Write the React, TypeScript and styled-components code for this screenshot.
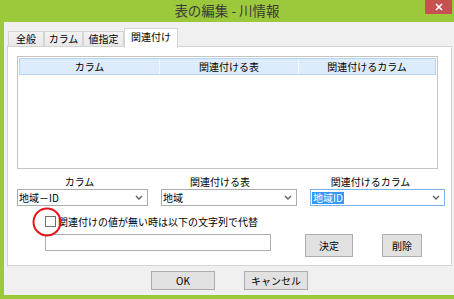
import styled, {createGlobalStyle} from "styled-components";

// 스타일
const GlobalStyle = createGlobalStyle`
  html, body {
    margin: 0;
    padding: 0;
  }
  body {
    width: 454px;
    height: 299px;
    overflow: hidden;
    font-family: "Noto Sans CJK JP", "Noto Sans", sans-serif;
    color: #000;
  }
  * {
    box-sizing: border-box;
  }
`;

const Window = styled.div`
  width: 454px;
  height: 299px;
  background: #9cc83c;
  display: flex;
  flex-direction: column;
`;
const TitleBar = styled.header`
  height: 22px;
  flex-shrink: 0;
  display: grid;
  grid-template-columns: 1fr auto 1fr;
  align-items: start;
`;
const Title = styled.h1`
  grid-column: 2;
  margin: 0;
  font-size: 13.5px;
  font-weight: normal;
  line-height: 21px;
  color: #3a3a3a;
`;
const CloseButton = styled.div`
  grid-column: 3;
  justify-self: end;
  margin-right: 2px;
  width: 27px;
  height: 14px;
  background: #c75050;
  display: flex;
  align-items: center;
  justify-content: center;
`;
const Frame = styled.div`
  flex: 1;
  padding: 0 4px 4px 4px;
  display: flex;
`;
const Body = styled.div`
  flex: 1;
  background: #f0f0f0;
  padding: 6px 4px 5px 3px;
  display: flex;
  flex-direction: column;
`;
const TabStrip = styled.div`
  height: 19px;
  margin-left: 1px;
  display: flex;
  align-items: flex-start;
`;
const Tab = styled.div<{$w: number; $active?: boolean}>`
  position: relative;
  z-index: ${p => (p.$active ? 2 : 0)};
  width: ${p => p.$w}px;
  height: ${p => (p.$active ? 20 : 15)}px;
  margin-top: ${p => (p.$active ? 0 : 3)}px;
  border: 1px solid #d4d4d4;
  border-bottom: none;
  background: ${p => (p.$active ? "#fff" : "linear-gradient(#f3f3f3, #e8e8e8)")};
  font-size: 10px;
  line-height: ${p => (p.$active ? 15 : 13)}px;
  text-align: center;
  & + & {
    border-left: ${p => (p.$active ? "1px solid #d4d4d4" : "none")};
  }
`;
const Panel = styled.section`
  position: relative;
  z-index: 1;
  margin-top: -1px;
  background: #fff;
  border: 1px solid #d4d4d4;
  padding: 9px 0 8px 9px;
  display: flex;
  flex-direction: column;
`;
const ListBox = styled.div`
  width: 421px;
  height: 113px;
  border: 1px solid #c4c4c4;
  padding: 1px;
`;
const ListHeader = styled.div`
  display: grid;
  grid-template-columns: 139px 139px 1fr;
  height: 17px;
  background: #dcecfc;
  border: 1px solid #b3d4f6;
`;
const HeaderCell = styled.div`
  font-size: 10px;
  line-height: 15px;
  text-align: center;
  border-left: 1px solid #f4f9fe;
  &:first-child {
    border-left: none;
  }
`;
const FieldRow = styled.div`
  margin-top: 6px;
  display: grid;
  grid-template-columns: 131px 136px 135px;
  column-gap: 13px;
`;
const Field = styled.div`
  display: flex;
  flex-direction: column;
  align-items: center;
`;
const FieldLabel = styled.div<{$shift: number}>`
  height: 14px;
  font-size: 10px;
  line-height: 14px;
  margin-right: ${p => p.$shift * 2}px;
`;
const Combo = styled.div<{$focused?: boolean}>`
  width: 100%;
  height: 17px;
  border: 1px solid ${p => (p.$focused ? "#7eb4ea" : "#acacac")};
  background: #fff;
  display: flex;
  align-items: center;
  justify-content: space-between;
  padding: 0 4px 0 1px;
  font-size: 10px;
`;
const Selected = styled.span`
  background: #3399ff;
  color: #fff;
  line-height: 12px;
  padding: 0 1px;
`;
const CheckRow = styled.label`
  position: relative;
  margin: 8px 0 0 28px;
  height: 14px;
  display: flex;
  align-items: center;
  font-size: 10px;
`;
const CheckBox = styled.span`
  width: 11px;
  height: 11px;
  border: 1px solid #707070;
  background: #fff;
  margin-right: 2px;
  flex-shrink: 0;
`;
const Annotation = styled.svg`
  position: absolute;
  left: -13px;
  top: -7px;
  pointer-events: none;
`;
const InputRow = styled.div`
  margin: 6px 0 0 28px;
  display: flex;
  align-items: flex-start;
`;
const TextBox = styled.div`
  width: 226px;
  height: 17px;
  border: 1px solid #abadb3;
  background: #fff;
  margin-right: 34px;
`;
const Button = styled.button<{$w: number; $h?: number}>`
  width: ${p => p.$w}px;
  height: ${p => p.$h ?? 23}px;
  margin-right: 29px;
  padding: 0;
  border: 1px solid #adadad;
  background: #e1e1e1;
  font-family: inherit;
  font-size: 10px;
  color: #000;
`;
const Footer = styled.footer`
  margin-top: 5px;
  display: flex;
  justify-content: center;
  gap: 29px;
  & > button {
    margin-right: 0;
  }
`;

// 기능
const tabs = [
  {label: "全般", width: 36},
  {label: "カラム", width: 39},
  {label: "値指定", width: 41},
  {label: "関連付け", width: 54, active: true},
];

const columns = ["カラム", "関連付ける表", "関連付けるカラム"];

function Chevron() {
  return (
    <svg width="8" height="5" viewBox="0 0 8 5">
      <path d="M1 1 L4 4 L7 1" fill="none" stroke="#606060" strokeWidth="1.4" />
    </svg>
  );
}

function App() {
  return (
    <Window>
      <GlobalStyle />
      <TitleBar>
        <Title>表の編集 - 川情報</Title>
        <CloseButton>
          <svg width="8" height="8" viewBox="0 0 8 8">
            <path d="M1 1 L7 7 M7 1 L1 7" stroke="#fff" strokeWidth="1.6" />
          </svg>
        </CloseButton>
      </TitleBar>
      <Frame>
        <Body>
          <TabStrip>
            {tabs.map(tab => (
              <Tab key={tab.label} $w={tab.width} $active={tab.active}>
                {tab.label}
              </Tab>
            ))}
          </TabStrip>
          <Panel>
            <ListBox>
              <ListHeader>
                {columns.map(c => (
                  <HeaderCell key={c}>{c}</HeaderCell>
                ))}
              </ListHeader>
            </ListBox>
            <FieldRow>
              <Field>
                <FieldLabel $shift={3}>カラム</FieldLabel>
                <Combo>
                  <span>地域－ID</span>
                  <Chevron />
                </Combo>
              </Field>
              <Field>
                <FieldLabel $shift={9}>関連付ける表</FieldLabel>
                <Combo>
                  <span>地域</span>
                  <Chevron />
                </Combo>
              </Field>
              <Field>
                <FieldLabel $shift={7}>関連付けるカラム</FieldLabel>
                <Combo $focused>
                  <Selected>地域ID</Selected>
                  <Chevron />
                </Combo>
              </Field>
            </FieldRow>
            <CheckRow>
              <CheckBox />
              関連付けの値が無い時は以下の文字列で代替
              <Annotation width="30" height="30" viewBox="0 0 30 30">
                <circle cx="15" cy="15" r="13.5" fill="none" stroke="#e8141b" strokeWidth="2" />
              </Annotation>
            </CheckRow>
            <InputRow>
              <TextBox />
              <Button $w={48}>決定</Button>
              <Button $w={40}>削除</Button>
            </InputRow>
          </Panel>
          <Footer>
            <Button $w={64} $h={19}>OK</Button>
            <Button $w={64} $h={19}>キャンセル</Button>
          </Footer>
        </Body>
      </Frame>
    </Window>
  );
}

export default App;
